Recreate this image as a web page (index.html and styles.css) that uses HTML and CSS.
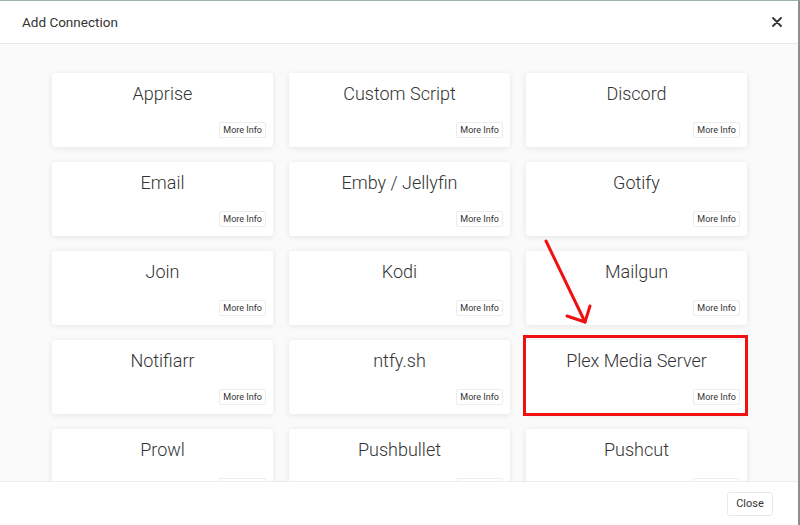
FILE: index.html
```html
<!DOCTYPE html>
<html>
<head>
<meta charset="utf-8">
<link rel="stylesheet" href="styles.css">
</head>
<body>
<div class="modal">
  <header class="modal-header">
    <h1 class="modal-title">Add Connection</h1>
    <button class="close-x" aria-label="Close">
      <svg width="10" height="10" viewBox="0 0 10 10"><path d="M1 1L9 9M9 1L1 9" stroke="#333" stroke-width="1.8" stroke-linecap="round"/></svg>
    </button>
  </header>
  <main class="modal-body">
    <div class="grid">
      <div class="card"><div class="card-title">Apprise</div><button class="info">More Info</button></div>
      <div class="card"><div class="card-title">Custom Script</div><button class="info">More Info</button></div>
      <div class="card"><div class="card-title">Discord</div><button class="info">More Info</button></div>
      <div class="card"><div class="card-title">Email</div><button class="info">More Info</button></div>
      <div class="card"><div class="card-title">Emby / Jellyfin</div><button class="info">More Info</button></div>
      <div class="card"><div class="card-title">Gotify</div><button class="info">More Info</button></div>
      <div class="card"><div class="card-title">Join</div><button class="info">More Info</button></div>
      <div class="card"><div class="card-title">Kodi</div><button class="info">More Info</button></div>
      <div class="card"><div class="card-title">Mailgun</div><button class="info">More Info</button></div>
      <div class="card"><div class="card-title">Notifiarr</div><button class="info">More Info</button></div>
      <div class="card"><div class="card-title">ntfy.sh</div><button class="info">More Info</button></div>
      <div class="card highlight"><div class="card-title">Plex Media Server</div><button class="info">More Info</button></div>
      <div class="card"><div class="card-title">Prowl</div><button class="info">More Info</button></div>
      <div class="card"><div class="card-title">Pushbullet</div><button class="info">More Info</button></div>
      <div class="card"><div class="card-title">Pushcut</div><button class="info">More Info</button></div>
    </div>
  </main>
  <footer class="modal-footer">
    <button class="close-btn">Close</button>
  </footer>
  <svg class="arrow" width="60" height="100" viewBox="0 0 60 100">
    <path d="M6 3L45 84" stroke="#f01010" stroke-width="3" stroke-linecap="round" fill="none"/>
    <path d="M27 78L45 84L50 68" stroke="#f01010" stroke-width="3" stroke-linecap="round" stroke-linejoin="round" fill="none"/>
  </svg>
</div>
</body>
</html>
```
FILE: styles.css
```css
* { box-sizing: border-box; }
html, body { margin: 0; padding: 0; }
body {
  width: 800px;
  height: 525px;
  overflow: hidden;
  font-family: Roboto, "Liberation Sans", sans-serif;
  color: #333;
  background: #fff;
}
.modal {
  position: relative;
  width: 800px;
  height: 525px;
  display: flex;
  flex-direction: column;
  border-top: 1px solid #9fb3ad;
  border-right: 2px solid #8e8e8e;
  background: #fff;
}
.modal-header {
  height: 43px;
  flex: none;
  display: flex;
  align-items: center;
  justify-content: space-between;
  padding: 0 15px 0 22px;
  border-bottom: 1px solid #e6e6e6;
}
.modal-title {
  margin: 0;
  font-size: 13.5px;
  font-weight: 400;
  color: #333;
}
.close-x {
  border: 0;
  background: none;
  padding: 0;
  width: 12px;
  height: 12px;
  display: flex;
  align-items: center;
  justify-content: center;
}
.modal-body {
  flex: 1;
  overflow: hidden;
  background: #fafafa;
  padding-top: 29px;
}
.grid {
  display: grid;
  grid-template-columns: repeat(3, 221px);
  grid-auto-rows: 74px;
  column-gap: 16px;
  row-gap: 15px;
  padding-left: 52px;
}
.card {
  position: relative;
  background: #fff;
  border-radius: 3px;
  box-shadow: 0 1px 6px rgba(0, 0, 0, 0.09);
  display: flex;
  flex-direction: column;
  align-items: center;
  padding: 10px 7px 9px;
}
.card-title {
  font-size: 18px;
  font-weight: 300;
  line-height: 22px;
  color: #333;
}
.info {
  margin-top: auto;
  align-self: flex-end;
  font-family: Roboto, "Liberation Sans", sans-serif;
  font-size: 9px;
  line-height: 14px;
  padding: 0 3px;
  color: #333;
  background: #fff;
  border: 1px solid #ececec;
  border-radius: 2px;
}
.highlight::after {
  content: "";
  position: absolute;
  top: -5px;
  left: -3px;
  right: -1px;
  bottom: -2px;
  border: 3px solid #ef1111;
}
.modal-footer {
  height: 44px;
  flex: none;
  display: flex;
  align-items: center;
  justify-content: flex-end;
  padding: 0 25px 0 0;
  border-top: 1px solid #ececec;
  background: #fff;
}
.close-btn {
  font-family: Roboto, "Liberation Sans", sans-serif;
  font-size: 11px;
  color: #333;
  height: 24px;
  width: 46px;
  padding: 0;
  background: #fff;
  border: 1px solid #e8e8e8;
  border-radius: 3px;
}
.arrow {
  position: absolute;
  left: 540px;
  top: 237px;
}
```
